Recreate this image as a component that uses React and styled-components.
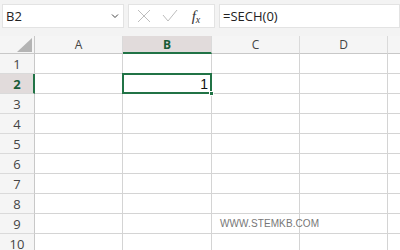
import React from "react";
import styled, { createGlobalStyle } from "styled-components";

const Global = createGlobalStyle`
  html, body {
    margin: 0;
    padding: 0;
    background: #ffffff;
    overflow: hidden;
  }
  * { box-sizing: border-box; }
`;

const Page = styled.div`
  width: 400px;
  height: 250px;
  overflow: hidden;
  background: #f3f3f3;
  font-family: "Open Sans", "Liberation Sans", sans-serif;
  position: relative;
`;

const Toolbar = styled.div`
  display: flex;
  align-items: stretch;
  gap: 4px;
  height: 24px;
  margin: 4px 0 8px 2px;
`;

const Box = styled.div`
  background: #ffffff;
  border: 1px solid #e3e3e3;
  display: flex;
  align-items: center;
  width: ${(p) => p.$w || "auto"};
  flex: ${(p) => (p.$grow ? 1 : "none")};
`;

const NameText = styled.span`
  flex: 1;
  padding-left: 3px;
  font-size: 13px;
  color: #222;
`;

const Chevron = styled.svg`
  width: 8px;
  height: 8px;
  margin-right: 4px;
`;

const IconSlot = styled.div`
  width: 26px;
  display: flex;
  justify-content: center;
  align-items: center;
`;

const Fx = styled.span`
  font-family: "Liberation Serif", serif;
  font-style: italic;
  font-size: 15px;
  color: #333;
  sub {
    font-size: 10px;
    vertical-align: -2px;
  }
`;

const Formula = styled.span`
  padding-left: 3px;
  font-size: 13px;
  color: #222;
`;

const Sheet = styled.div`
  display: grid;
  grid-template-columns: 35px 88px 89px 88px 88px 40px;
  grid-auto-rows: 20px;
  grid-template-rows: 18px;
  background: #ffffff;
`;

const Corner = styled.div`
  background: #f5f5f5;
  border-right: 1px solid #c8c8c8;
  border-bottom: 1px solid #c8c8c8;
  display: flex;
  justify-content: flex-end;
  align-items: flex-end;
  padding: 0 2px 1px 0;
`;

const ColHead = styled.div`
  background: ${(p) => (p.$sel ? "#e1dbdb" : "#f5f5f5")};
  border-right: 1px solid #dadada;
  border-bottom: ${(p) => (p.$sel ? "2px solid #217346" : "1px solid #c8c8c8")};
  display: flex;
  justify-content: center;
  align-items: center;
  font-size: 12px;
  color: ${(p) => (p.$sel ? "#185c37" : "#444")};
  font-weight: ${(p) => (p.$sel ? 700 : 400)};
  padding-top: ${(p) => (p.$sel ? "1px" : "0")};
`;

const RowHead = styled.div`
  background: ${(p) => (p.$sel ? "#e1dbdb" : "#f5f5f5")};
  border-right: ${(p) => (p.$sel ? "2px solid #217346" : "1px solid #c8c8c8")};
  border-bottom: 1px solid #dadada;
  display: flex;
  justify-content: center;
  align-items: center;
  font-size: 13px;
  color: ${(p) => (p.$sel ? "#185c37" : "#444")};
  font-weight: ${(p) => (p.$sel ? 700 : 400)};
  padding-left: ${(p) => (p.$sel ? "1px" : "0")};
`;

const Cell = styled.div`
  border-right: 1px solid #d4d4d4;
  border-bottom: 1px solid #d4d4d4;
  display: flex;
  align-items: center;
  justify-content: flex-end;
  font-family: "Liberation Sans", sans-serif;
  font-size: 14px;
  color: #111;
  position: relative;
`;

const Active = styled.div`
  position: absolute;
  left: -1px;
  top: -1px;
  right: -1px;
  bottom: -1px;
  border: 2px solid #217346;
  display: flex;
  align-items: center;
  justify-content: flex-end;
  padding-right: 2px;
  z-index: 2;
`;

const Handle = styled.div`
  position: absolute;
  right: -4px;
  bottom: -4px;
  width: 5px;
  height: 5px;
  background: #217346;
  border: 1px solid #fff;
`;

const Watermark = styled.div`
  position: absolute;
  left: 220px;
  top: 218px;
  font-family: "Liberation Sans", sans-serif;
  font-size: 10px;
  color: #777;
  letter-spacing: 0.1px;
`;

const cols = ["A", "B", "C", "D", ""];
const rows = [1, 2, 3, 4, 5, 6, 7, 8, 9, 10];

export default function App() {
  return (
    <Page>
      <Global />
      <Toolbar>
        <Box $w="122px">
          <NameText>B2</NameText>
          <Chevron viewBox="0 0 8 8">
            <path d="M1 2.5 L4 5.5 L7 2.5" fill="none" stroke="#444" strokeWidth="1" />
          </Chevron>
        </Box>
        <Box $w="87px">
          <IconSlot style={{ marginLeft: 2 }}>
            <svg width="14" height="14" viewBox="0 0 14 14">
              <path d="M1 1 L13 13 M13 1 L1 13" stroke="#bdbdbd" strokeWidth="1" />
            </svg>
          </IconSlot>
          <IconSlot>
            <svg width="16" height="14" viewBox="0 0 16 14">
              <path d="M1 6 L6 12 L15 1" fill="none" stroke="#bdbdbd" strokeWidth="1" />
            </svg>
          </IconSlot>
          <IconSlot>
            <Fx>
              f<sub>x</sub>
            </Fx>
          </IconSlot>
        </Box>
        <Box $grow>
          <Formula>=SECH(0)</Formula>
        </Box>
      </Toolbar>
      <Sheet>
        <Corner>
          <svg width="15" height="14" viewBox="0 0 15 14">
            <path d="M15 0 L15 14 L0 14 Z" fill="#b4b4b4" />
          </svg>
        </Corner>
        {cols.map((c, i) => (
          <ColHead key={i} $sel={c === "B"}>
            {c}
          </ColHead>
        ))}
        {rows.map((r) => (
          <React.Fragment key={r}>
            <RowHead $sel={r === 2}>{r}</RowHead>
            {cols.map((c, i) => (
              <Cell key={i}>
                {r === 2 && c === "B" && (
                  <Active>
                    1
                    <Handle />
                  </Active>
                )}
              </Cell>
            ))}
          </React.Fragment>
        ))}
      </Sheet>
      <Watermark>WWW.STEMKB.COM</Watermark>
    </Page>
  );
}
